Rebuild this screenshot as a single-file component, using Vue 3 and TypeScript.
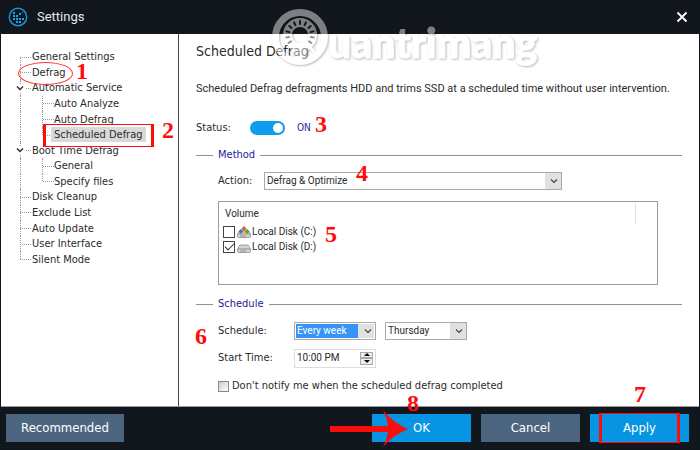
<script setup lang="ts">
import { ref } from 'vue'

interface TreeItem {
  label: string
  child?: boolean
  expandable?: boolean
  last?: boolean
  selected?: boolean
}

const tree: TreeItem[] = [
  { label: 'General Settings' },
  { label: 'Defrag' },
  { label: 'Automatic Service', expandable: true },
  { label: 'Auto Analyze', child: true },
  { label: 'Auto Defrag', child: true },
  { label: 'Scheduled Defrag', child: true, last: true, selected: true },
  { label: 'Boot Time Defrag', expandable: true },
  { label: 'General', child: true },
  { label: 'Specify files', child: true, last: true },
  { label: 'Disk Cleanup' },
  { label: 'Exclude List' },
  { label: 'Auto Update' },
  { label: 'User Interface' },
  { label: 'Silent Mode', last: true },
]

const enabled = ref(true)
const action = ref('Defrag & Optimize')
const frequency = ref('Every week')
const day = ref('Thursday')
const startTime = ref('10:00 PM')
const muted = ref(false)
const volumes = ref([
  { id: 'c', label: 'Local Disk (C:)', checked: false, system: true },
  { id: 'd', label: 'Local Disk (D:)', checked: true, system: false },
])
const rays = Array.from({ length: 11 }, (_, i) => -125 + i * 25)
</script>

<template>
  <div class="window">
    <header class="titlebar">
      <svg class="logo" viewBox="0 0 20 20" width="20" height="20" aria-hidden="true">
        <circle cx="10" cy="10" r="8.7" fill="none" stroke="#1593dc" stroke-width="1.5" />
        <g fill="#1ea4ee">
          <rect x="5" y="5" width="2" height="2" /><rect x="8" y="8" width="2" height="2" />
          <rect x="5" y="8" width="2" height="2" /><rect x="11" y="6" width="2" height="2" />
          <rect x="5" y="11" width="2" height="2" /><rect x="8" y="11" width="2" height="2" />
          <rect x="11" y="11" width="2" height="2" /><rect x="8" y="14" width="2" height="2" />
          <rect x="11" y="14" width="2" height="2" /><rect x="14" y="11" width="2" height="2" />
          <rect x="14" y="5" width="1" height="1" />
        </g>
      </svg>
      <h1>Settings</h1>
      <button class="close" aria-label="Close">
        <svg viewBox="0 0 12 12" width="12" height="12"><path d="M1.500 1.500 10.500 10.500M10.500 1.500 1.500 10.500" stroke="#fff" stroke-width="1.800" /></svg>
      </button>
    </header>

    <div class="body">
      <nav class="sidebar">
        <ul class="tree">
          <li
            v-for="(item, i) in tree"
            :key="i"
            class="row"
            :class="{ first: i === 0, child: item.child, last: item.last, selected: item.selected }"
          >
            <svg v-if="item.expandable" class="chevron" viewBox="0 0 8 8" width="8" height="8" aria-hidden="true"><path d="M1 2.500 4 5.500 7 2.500" fill="none" stroke="#333" stroke-width="1.500" /></svg>
            <span v-if="item.child" class="guide"></span>
            <a href="#">{{ item.label }}</a>
          </li>
        </ul>
      </nav>

      <main class="content">
        <h2>Scheduled Defrag</h2>
        <p class="intro">Scheduled Defrag defragments HDD and trims SSD at a scheduled time without user intervention.</p>

        <div class="status">
          <label for="status">Status:</label>
          <input id="status" v-model="enabled" class="switch" type="checkbox" role="switch">
          <span class="state">{{ enabled ? 'ON' : 'OFF' }}</span>
        </div>

        <section>
          <h3>Method</h3>
          <div class="field action">
            <label for="action">Action:</label>
            <span class="select wide">
              <select id="action" v-model="action"><option>Defrag &amp; Optimize</option></select>
              <svg viewBox="0 0 8 8" width="8" height="8" aria-hidden="true"><path d="M1 2.500 4 5.500 7 2.500" /></svg>
            </span>
          </div>
          <div class="volumes">
            <div class="volume-head">Volume</div>
            <label v-for="v in volumes" :key="v.id" class="volume">
              <input v-model="v.checked" type="checkbox">
              <svg viewBox="0 0 14 12" width="14" height="12" aria-hidden="true">
                <path d="M3 4h8l2.500 4v2.500q0 1-1 1h-11q-1 0-1-1V8z" fill="#d2d4d6" stroke="#8b8e91" stroke-width=".8" />
                <path d="M1 8h12M3 10h6" stroke="#8f9295" fill="none" />
                <g v-if="v.system">
                  <path d="M7 0 9.500 2.500 7 5 4.500 2.500z" fill="#e65a2f" />
                  <path d="M10 3 12.500 5.500 10 8 7.500 5.500z" fill="#5da536" />
                  <path d="M4 3 6.500 5.500 4 8 1.500 5.500z" fill="#397fcb" />
                  <path d="M7 5.500 9 7.500 7 9.500 5 7.500z" fill="#f0b92c" />
                </g>
              </svg>
              <span>{{ v.label }}</span>
            </label>
          </div>
        </section>

        <section class="schedule">
          <h3>Schedule</h3>
          <div class="field frequency">
            <label for="frequency">Schedule:</label>
            <span class="select short active">
              <select id="frequency" v-model="frequency"><option>Every week</option></select>
              <svg viewBox="0 0 8 8" width="8" height="8" aria-hidden="true"><path d="M1 2.500 4 5.500 7 2.500" /></svg>
            </span>
            <span class="select short">
              <select v-model="day" aria-label="Day"><option>Thursday</option></select>
              <svg viewBox="0 0 8 8" width="8" height="8" aria-hidden="true"><path d="M1 2.500 4 5.500 7 2.500" /></svg>
            </span>
          </div>
          <div class="field time">
            <label for="start">Start Time:</label>
            <span class="spinner">
              <input id="start" v-model="startTime" type="text">
              <span class="steps">
                <button aria-label="Later"><svg viewBox="0 0 6 3" width="6" height="3"><path d="M3 0 6 3H0z" /></svg></button>
                <button aria-label="Earlier"><svg viewBox="0 0 6 3" width="6" height="3"><path d="M3 3 0 0h6z" /></svg></button>
              </span>
            </span>
          </div>
          <label class="mute">
            <input v-model="muted" type="checkbox">
            <span>Don't notify me when the scheduled defrag completed</span>
          </label>
        </section>
      </main>
    </div>

    <footer class="footer">
      <button class="btn recommended">Recommended</button>
      <div class="actions">
        <button class="btn primary">OK</button>
        <button class="btn">Cancel</button>
        <button class="btn primary">Apply</button>
      </div>
    </footer>

    <svg class="watermark" viewBox="0 0 280 70" width="280" height="70" aria-hidden="true">
      <g class="mark">
        <circle cx="32" cy="33" r="24.500" fill="none" stroke="#fff" stroke-width="7" />
        <circle cx="32" cy="31" r="12.500" fill="none" stroke="#fff" stroke-width="9" />
        <path d="M26 42h12v9q-6 4-12 0zM42 43l8 10" fill="#fff" stroke="#fff" stroke-width="3" />
        <text x="60" y="54">uantrimang</text>
      </g>
      <g stroke="#12171e" stroke-width="2" stroke-linecap="round">
        <path v-for="r in rays" :key="r" d="M32 17V20" :transform="`rotate(${r} 32 31)`" />
      </g>
    </svg>

    <div class="marks">
      <span class="ellipse"></span>
      <span class="box item-box"></span>
      <span class="box apply-box"></span>
      <svg class="arrow" viewBox="0 0 80 38" width="80" height="38" aria-hidden="true"><path d="M0 16H58Q57 8 53 0 63 13 78 19 63 25 53 37 57 30 58 22H0z" fill="#fe0c0c" /></svg>
      <b class="n1">1</b><b class="n2">2</b><b class="n3">3</b><b class="n4">4</b>
      <b class="n5">5</b><b class="n6">6</b><b class="n7">7</b><b class="n8">8</b>
    </div>
  </div>
</template>

<style>
body { background: #12171e; }
</style>

<style scoped>
* { box-sizing: border-box; }
.window {
  position: relative;
  display: flex;
  flex-direction: column;
  min-height: 100vh;
  background: #12171e;
  color: #2b2b2b;
  font: 11px/16px "DejaVu Sans Condensed", "DejaVu Sans", sans-serif;
}
h1, h2, h3, p, ul { margin: 0; padding: 0; font-weight: normal; }
button, input, select { font: inherit; color: inherit; margin: 0; }
.titlebar { display: flex; align-items: center; gap: 9px; height: 34px; padding: 0 10px 0 8px; color: #fff; }
h1 { flex: 1; font-family: Roboto, sans-serif; font-size: 13px; color: #e6e8ea; }
.close { display: flex; padding: 2px; border: 0; background: none; }
.body { flex: 1; display: flex; margin: 0 1px; background: #fff; border-bottom: 1px solid #999; }
.sidebar { flex: none; width: 178px; padding: 15px 0 0 19px; border-right: 1px solid #444; }
.tree { display: grid; grid-auto-rows: 1fr; height: 218px; list-style: none; }
.row { position: relative; display: flex; align-items: center; padding-left: 12px; }
.row::before { content: ""; position: absolute; left: 0; top: 0; bottom: 0; border-left: 1px dotted #999; }
.row.first::before { top: 50%; }
.row.last:not(.child)::before { bottom: 50%; }
.row:not(.child)::after { content: ""; position: absolute; left: 0; top: 50%; width: 11px; border-top: 1px dotted #999; }
.row.child { padding-left: 34px; }
.guide { position: absolute; left: 22px; top: 0; bottom: 0; width: 11px; border-left: 1px dotted #999; }
.guide::after { content: ""; position: absolute; left: 0; top: 50%; width: 11px; border-top: 1px dotted #999; }
.row.last .guide { bottom: 50%; }
.row.last .guide::after { top: 100%; }
.row a { color: inherit; text-decoration: none; white-space: nowrap; line-height: 15px; }
.row.selected a { z-index: 1; margin-left: -3px; padding: 0 3px; background: #d9d9d9; }
.chevron { position: absolute; z-index: 1; left: -5px; top: 4px; width: 10px; height: 8px; background: #fff; }
.content { flex: 1; min-width: 0; padding: 7px 17px 0 17px; }
h2 { font-size: 14px; line-height: 20px; }
.intro { margin-top: 18px; white-space: nowrap; font-family: Roboto, sans-serif; line-height: 20px; }
.status { display: flex; align-items: center; margin-top: 20px; height: 18px; }
.status label { width: 54px; }
.switch { appearance: none; width: 35px; height: 14px; padding: 2px; border-radius: 7px; background: #c0c0c0; }
.switch::before { content: ""; display: block; width: 10px; height: 10px; border-radius: 5px; background: #fff; }
.switch:checked { background: #0c9cf0; }
.switch:checked::before { margin-left: 21px; }
.state { margin-left: 12px; color: #1b1b96; font-size: 10px; }
section { margin-top: 9px; }
h3 { display: flex; align-items: center; gap: 5px; color: #1b1b96; font-size: 11px; line-height: 18px; }
h3::before, h3::after { content: ""; height: 1px; background: #909095; }
h3::before { width: 17px; }
h3::after { flex: 1; }
.field { display: flex; align-items: center; gap: 9px; height: 18px; padding-left: 22px; }
.field label { width: 67px; }
.action { margin-top: 8px; gap: 0; }
.action label { width: 46px; }
.select { position: relative; height: 18px; }
.select select { appearance: none; display: block; width: 100%; height: 18px; padding: 0 18px 0 2px; border: 1px solid #a9a9a9; border-radius: 0; background: linear-gradient(#e1e1e1, #e1e1e1) right / 16px 100% no-repeat #fff; font-family: Roboto, sans-serif; font-size: 10px; }
.select svg { position: absolute; right: 4px; top: 5px; pointer-events: none; }
.select path { fill: none; stroke: #444; stroke-width: 1.2; }
.wide { width: 298px; }
.short { width: 82px; }
.active select { color: #fff; box-shadow: inset 0 0 0 1px #fff; background: linear-gradient(#e1e1e1, #e1e1e1) right / 17px 100% no-repeat #3794f7; }
.volumes { height: 84px; margin: 11px 24px 0 22px; padding: 1px 4px; border: 1px solid #989aa8; font-family: Roboto, sans-serif; font-size: 10px; }
.volume-head { height: 21px; margin-right: 17px; padding-left: 2px; border-right: 1px solid #e2e2e2; line-height: 21px; }
.volume { display: flex; align-items: center; gap: 1px; height: 15px; }
.volume input { margin-right: 1px; }
input[type="checkbox"]:not(.switch) { appearance: none; display: grid; width: 12px; height: 12px; border: 1px solid #444; background: #fff; }
.volume input:checked::before { content: ""; width: 8px; height: 4px; margin: 1px; border: solid #333; border-width: 0 0 1px 1px; transform: rotate(-45deg); }
.schedule { margin-top: 10px; }
.frequency { margin-top: 9px; }
.time { margin-top: 9px; }
.spinner { display: flex; width: 82px; height: 19px; padding: 2px; border: 1px solid #ddd; }
.spinner input { width: 63px; padding: 0; border: 0; font-family: Roboto, sans-serif; font-size: 10px; }
.steps { display: flex; flex-direction: column; width: 13px; }
.steps button { flex: 1; display: flex; align-items: center; justify-content: center; padding: 0; border: 1px solid #aaa; background: #eee; }
.mute { display: flex; align-items: center; gap: 3px; margin-top: 11px; padding-left: 22px; }
.mute input[type="checkbox"]:not(.switch) { width: 11px; height: 11px; border-color: #888; background: linear-gradient(135deg, #ccc, #fff); }
.footer { display: flex; align-items: center; justify-content: space-between; height: 43px; padding: 0 11px 1px 6px; }
.actions { display: flex; gap: 10px; }
.btn { width: 99px; height: 28px; padding: 0; border: 0; background: #4c6680; color: #fff; font-size: 13px; }
.recommended { width: 118px; }
.primary { background: #0795e3; }
.watermark { position: absolute; left: 268px; top: 4px; opacity: .45; pointer-events: none; }
.mark { filter: drop-shadow(1px 1px 1px rgba(0, 0, 0, .6)); }
.watermark text { font: 900 41px Lato, sans-serif; fill: #fff; stroke: #fff; stroke-width: 1; stroke-linejoin: round; }
.marks { position: absolute; inset: 0; pointer-events: none; color: #fe0c0c; font: bold 24px/24px "Liberation Serif", serif; }
.marks > * { position: absolute; }
.ellipse { left: 18px; top: 62px; width: 55px; height: 23px; border: 1px solid #f33; border-radius: 50%; }
.box { border: solid #fe0c0c; border-width: 1px 3px; }
.item-box { left: 43px; top: 124px; width: 111px; height: 23px; }
.apply-box { right: 20px; bottom: 7px; width: 81px; height: 30px; }
.arrow { right: 290px; bottom: 2px; }
.n1 { left: 76px; top: 59px; } .n2 { left: 162px; top: 118px; }
.n3 { left: 315px; top: 112px; } .n4 { left: 356px; top: 161px; }
.n5 { left: 325px; top: 222px; } .n6 { left: 195px; top: 324px; }
.n7 { right: 54px; bottom: 44px; } .n8 { right: 281px; bottom: 35px; }
</style>
